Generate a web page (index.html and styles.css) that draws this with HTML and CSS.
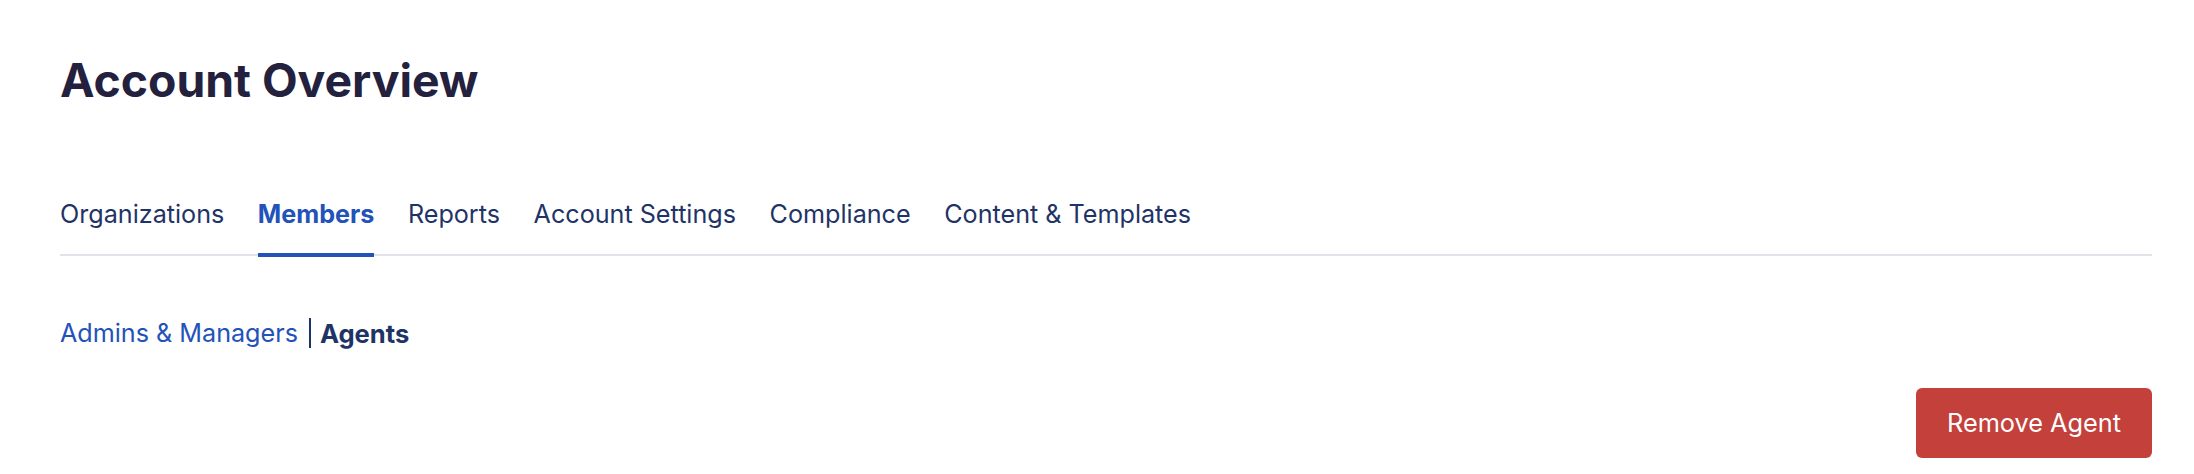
FILE: index.html
```html
<!DOCTYPE html>
<html lang="en">
<head>
<meta charset="utf-8">
<title>Account Overview</title>
<link rel="stylesheet" href="styles.css">
</head>
<body>
<main class="page">
  <h1 class="title">Account Overview</h1>
  <nav class="tabs">
    <a class="tab">Organizations</a>
    <a class="tab active">Members</a>
    <a class="tab">Reports</a>
    <a class="tab">Account Settings</a>
    <a class="tab">Compliance</a>
    <a class="tab">Content &amp; Templates</a>
  </nav>
  <div class="subnav">
    <a class="sublink">Admins &amp; Managers</a>
    <span class="sep"></span>
    <span class="subcurrent">Agents</span>
  </div>
  <div class="actions">
    <button class="btn-danger" type="button">Remove Agent</button>
  </div>
</main>
</body>
</html>
```
FILE: styles.css
```css
html, body {
  margin: 0;
  padding: 0;
  background: #ffffff;
}
body {
  font-family: Inter, "Noto Sans", "Liberation Sans", sans-serif;
  color: #1f3466;
}
.page {
  padding: 53px 42px 0 60px;
}
.title {
  margin: 0;
  font-size: 46.3px;
  line-height: 55px;
  font-weight: 700;
  color: #23213d;
}
.tabs {
  margin-top: 88px;
  display: flex;
  gap: 33.6px;
  border-bottom: 2px solid #e2e2ea;
}
.tab {
  font-size: 25.15px;
  line-height: 37.5px;
  padding-bottom: 19px;
  border-bottom: 4px solid transparent;
  margin-bottom: -3px;
  color: #1f3466;
  cursor: pointer;
}
.tab.active {
  color: #2352b8;
  font-weight: 700;
  border-bottom-color: #2352b8;
}
.subnav {
  margin-top: 59px;
  display: flex;
  align-items: center;
  font-size: 25.15px;
  line-height: 37.5px;
}
.sublink {
  color: #2352b8;
  cursor: pointer;
}
.sep {
  display: inline-block;
  width: 2px;
  height: 30px;
  background: #1f3466;
  margin: 0 9px 0 11px;
}
.subcurrent {
  font-weight: 700;
  font-size: 25.6px;
  color: #1f3466;
}
.actions {
  margin-top: 36px;
  display: flex;
  justify-content: flex-end;
}
.btn-danger {
  font-family: inherit;
  font-size: 25.3px;
  line-height: 38px;
  padding: 16px 31px;
  border: none;
  border-radius: 6px;
  background: #c4403a;
  color: #ffffff;
  cursor: pointer;
}
```
